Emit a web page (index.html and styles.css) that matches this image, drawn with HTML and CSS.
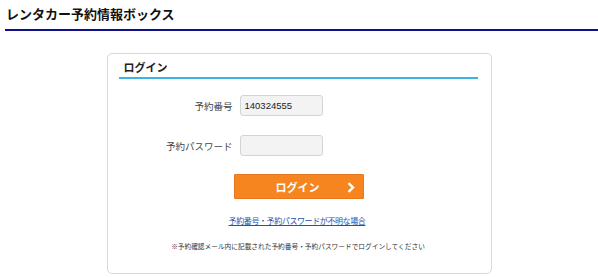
FILE: index.html
```html
<!DOCTYPE html>
<html lang="ja">
<head>
<meta charset="utf-8">
<title>レンタカー予約情報ボックス</title>
<link rel="stylesheet" href="styles.css">
</head>
<body>
<header class="page-head">
  <h1 class="page-title">レンタカー予約情報ボックス</h1>
  <div class="page-rule"></div>
</header>
<main class="card">
  <h2 class="card-title">ログイン</h2>
  <form class="login-form">
    <div class="row">
      <label class="row-label" for="num">予約番号</label>
      <input class="row-input" id="num" type="text" value="140324555">
    </div>
    <div class="row">
      <label class="row-label" for="pw">予約パスワード</label>
      <input class="row-input" id="pw" type="password" value="">
    </div>
    <button class="login-btn" type="button">
      <span class="btn-text">ログイン</span>
      <svg class="btn-arrow" width="8" height="11" viewBox="0 0 8 11"><path d="M1.5 1.2 L6 5.5 L1.5 9.8" fill="none" stroke="#fff" stroke-width="2.4"/></svg>
    </button>
    <a class="help-link" href="#">予約番号・予約パスワードが不明な場合</a>
    <p class="note">※予約確認メール内に記載された予約番号・予約パスワードでログインしてください</p>
  </form>
</main>
</body>
</html>
```
FILE: styles.css
```css
* { box-sizing: border-box; }
html, body { margin: 0; padding: 0; background: #fff; }
body {
  font-family: "Noto Sans CJK JP", "Liberation Sans", sans-serif;
  color: #222;
}
.page-head { padding: 6px 0 0 5px; }
.page-title {
  margin: 0;
  padding-left: 1px;
  font-size: 13px;
  line-height: 16px;
  font-weight: bold;
  color: #111;
}
.page-rule {
  margin-top: 7px;
  height: 2px;
  background: #10108a;
}
.card {
  width: 385px;
  height: 221px;
  margin: 22px auto 0;
  border: 1px solid #d8d8d8;
  border-radius: 5px;
  padding: 0 13px 0 11px;
}
.card-title {
  margin: 0;
  padding: 6px 0 3px 5px;
  font-size: 11px;
  line-height: 14px;
  font-weight: bold;
  color: #222;
  border-bottom: 2px solid #3ab3e6;
}
.login-form {
  display: flex;
  flex-direction: column;
  padding-top: 16px;
}
.row {
  display: flex;
  align-items: center;
  margin-bottom: 19px;
}
.row + .row { margin-bottom: 18px; }
.row-label {
  width: 114px;
  text-align: right;
  font-size: 9.5px;
  color: #444;
  margin-right: 7px;
}
.row-input {
  width: 83px;
  height: 21px;
  border: 1px solid #d4d4d4;
  border-radius: 3px;
  background: #f3f3f3;
  padding: 0 0 0 4px;
  font-family: "Liberation Sans", sans-serif;
  font-size: 9.5px;
  color: #222;
  outline: none;
}
.login-btn {
  position: relative;
  margin-left: 115px;
  width: 130px;
  height: 25px;
  border: 1px solid #e8761a;
  border-radius: 1px;
  background: #f6851f;
  display: flex;
  align-items: center;
  justify-content: center;
  padding: 0;
  cursor: pointer;
}
.btn-text {
  font-family: "Noto Sans CJK JP", sans-serif;
  font-size: 11px;
  font-weight: bold;
  color: #fff;
  margin-left: -2px;
}
.btn-arrow {
  position: absolute;
  right: 8px;
  top: 7px;
}
.help-link {
  align-self: center;
  margin-top: 16px;
  margin-right: 2px;
  font-size: 8px;
  letter-spacing: -0.4px;
  line-height: 12px;
  color: #1a55b0;
  text-decoration: underline;
}
.note {
  align-self: center;
  margin: 14px 0 0;
  font-size: 6.7px;
  line-height: 10px;
  color: #333;
}
```
